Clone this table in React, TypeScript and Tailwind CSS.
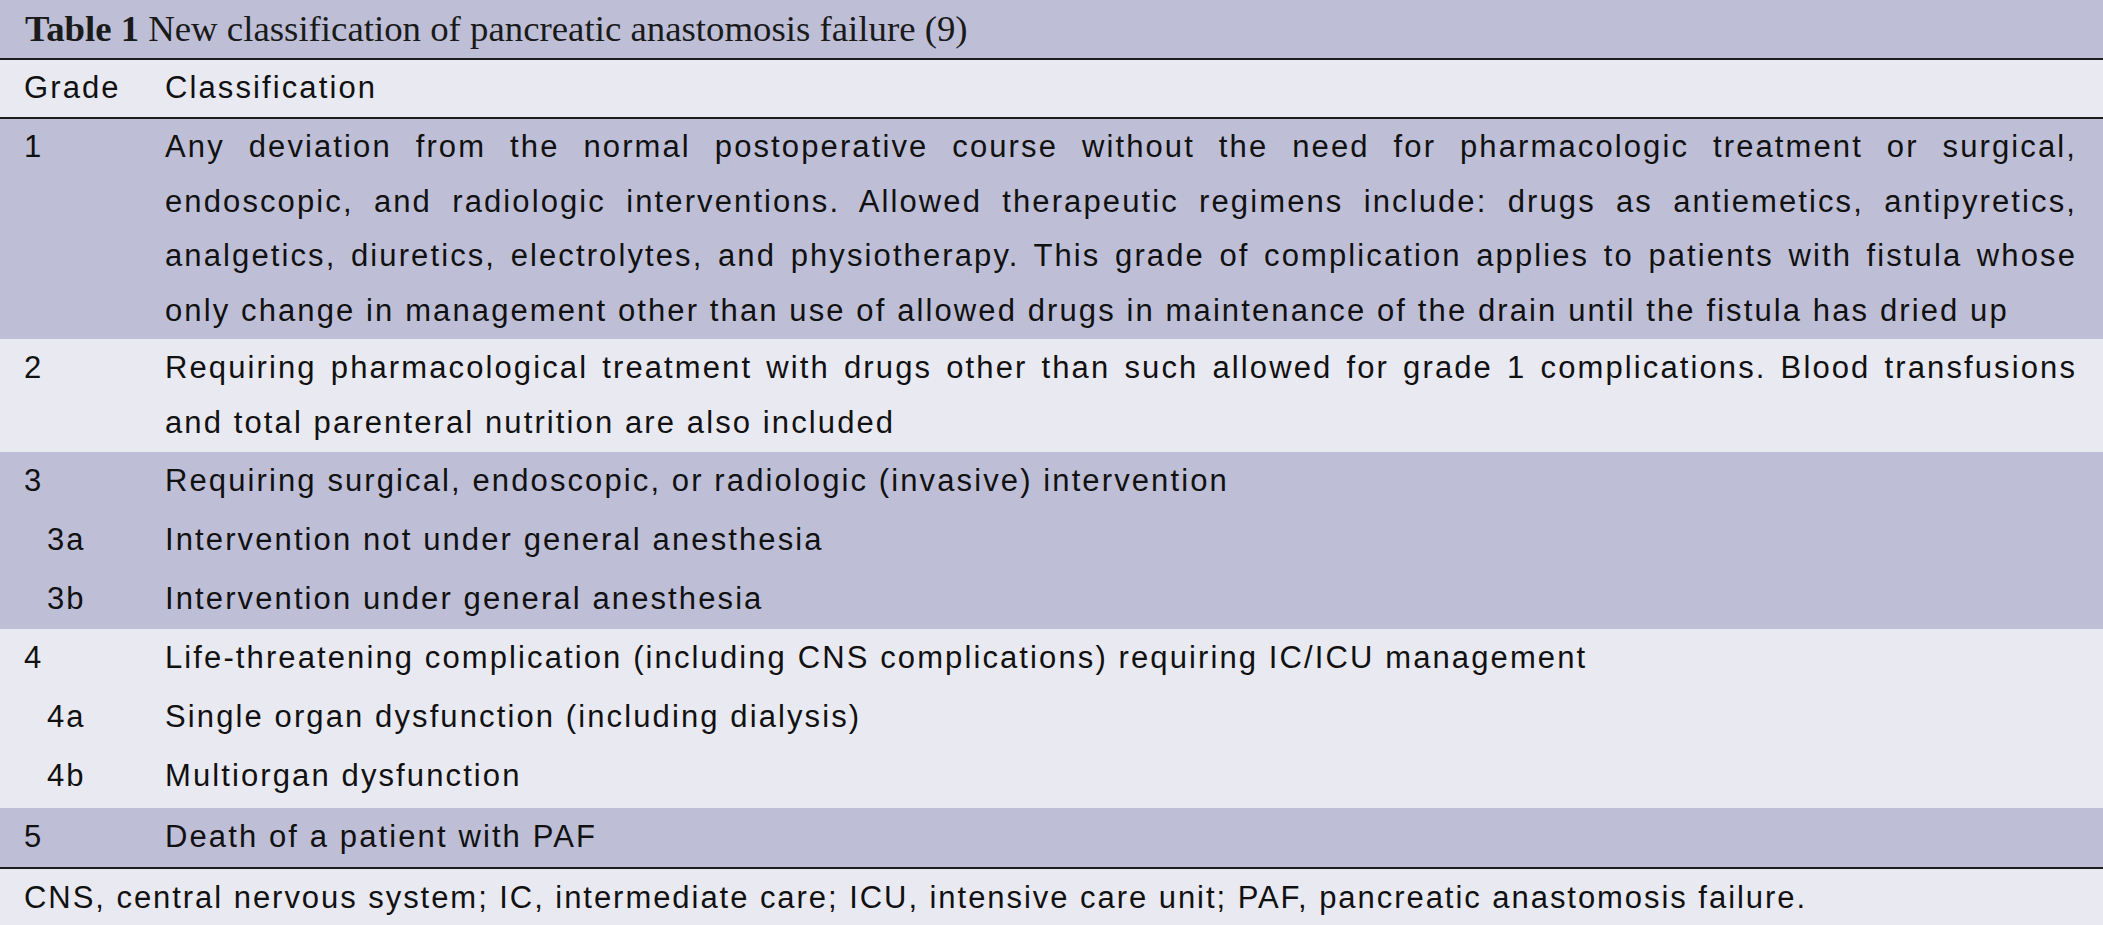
import React from "react";

const sans = "font-['Liberation_Sans',Arial,sans-serif]";

type Sub = { grade: string; text: string };
type Group = { tone: "dark" | "light"; grade: string; lines?: string[]; text?: string; subs?: Sub[] };

const groups: Group[] = [
  {
    tone: "dark",
    grade: "1",
    lines: [
      "Any deviation from the normal postoperative course without the need for pharmacologic treatment or surgical,",
      "endoscopic, and radiologic interventions. Allowed therapeutic regimens include: drugs as antiemetics, antipyretics,",
      "analgetics, diuretics, electrolytes, and physiotherapy. This grade of complication applies to patients with fistula whose",
      "only change in management other than use of allowed drugs in maintenance of the drain until the fistula has dried up",
    ],
  },
  {
    tone: "light",
    grade: "2",
    lines: [
      "Requiring pharmacological treatment with drugs other than such allowed for grade 1 complications. Blood transfusions",
      "and total parenteral nutrition are also included",
    ],
  },
  {
    tone: "dark",
    grade: "3",
    text: "Requiring surgical, endoscopic, or radiologic (invasive) intervention",
    subs: [
      { grade: "3a", text: "Intervention not under general anesthesia" },
      { grade: "3b", text: "Intervention under general anesthesia" },
    ],
  },
  {
    tone: "light",
    grade: "4",
    text: "Life-threatening complication (including CNS complications) requiring IC/ICU management",
    subs: [
      { grade: "4a", text: "Single organ dysfunction (including dialysis)" },
      { grade: "4b", text: "Multiorgan dysfunction" },
    ],
  },
  { tone: "dark", grade: "5", text: "Death of a patient with PAF" },
];

function Row({ grade, text, sub }: { grade: string; text: string; sub?: boolean }) {
  return (
    <div className="flex h-[59px] items-center">
      <div className={sub ? "w-[165px] pl-[47px]" : "w-[165px] pl-[24px]"}>{grade}</div>
      <div className="flex-1 pr-[26px]">{text}</div>
    </div>
  );
}

export default function App() {
  return (
    <div className={`w-[2103px] h-[925px] bg-[#e9e9f2] text-[#111] ${sans} text-[31px] tracking-[0.068em]`}>
      <div className="h-[58px] bg-[#bebfd6] flex items-center pl-[25px] font-['Liberation_Serif','Times_New_Roman',serif] text-[36.8px] tracking-normal text-[#1a1a1a]">
        <span className="font-bold mr-[9px]">Table 1</span>
        <span>New classification of pancreatic anastomosis failure (9)</span>
      </div>
      <div className="h-[2px] bg-[#1c1c1c]" />
      <div className="h-[57px] flex items-center">
        <div className="w-[165px] pl-[24px]">Grade</div>
        <div>Classification</div>
      </div>
      <div className="h-[2px] bg-[#1c1c1c]" />

      {groups.map((g, i) => (
        <div key={i} className={g.tone === "dark" ? "bg-[#bebfd6]" : "bg-[#e9e9f2]"}>
          {g.lines ? (
            <div className={`flex leading-[54.5px] ${g.lines.length > 2 ? "py-[1px]" : "py-[2px]"}`}>
              <div className="w-[165px] pl-[24px] shrink-0">{g.grade}</div>
              <div className="flex-1 pr-[26px]">
                {g.lines.map((l, j) => (
                  <div
                    key={j}
                    className={j < g.lines!.length - 1 ? "text-justify [text-align-last:justify]" : ""}
                  >
                    {l}
                  </div>
                ))}
              </div>
            </div>
          ) : (
            <>
              <Row grade={g.grade} text={g.text!} />
              {g.subs?.map((s) => <Row key={s.grade} grade={s.grade} text={s.text} sub />)}
            </>
          )}
          {g.subs && g.tone === "light" && <div className="h-[2px]" />}
        </div>
      ))}

      <div className="h-[2px] bg-[#1c1c1c]" />
      <div className="h-[58px] flex items-center pl-[24px] tracking-[0.063em]">
        CNS, central nervous system; IC, intermediate care; ICU, intensive care unit; PAF, pancreatic anastomosis failure.
      </div>
    </div>
  );
}
